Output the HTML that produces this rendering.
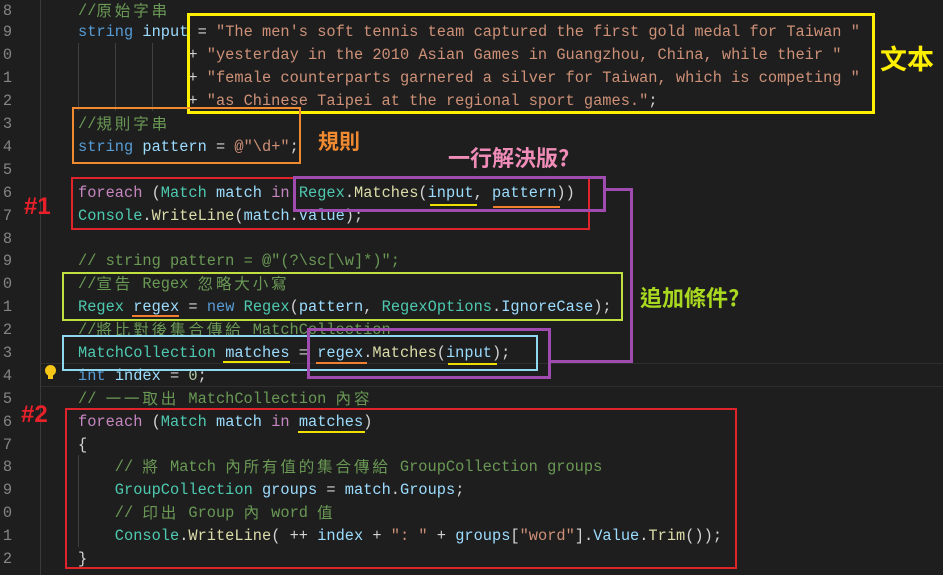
<!DOCTYPE html>
<html><head><meta charset="utf-8"><style>
html,body{margin:0;padding:0;background:#1e1e1e;width:943px;height:575px;overflow:hidden;position:relative}
.ln{position:absolute;left:0;width:12px;overflow:hidden;direction:rtl;color:#858585;font:15.3px "Liberation Mono",monospace;line-height:22px}
.code{position:absolute;left:78px;white-space:pre;font:15.33px "Liberation Mono","Noto Sans CJK TC",monospace;color:#d4d4d4;line-height:22px;height:22px}
.k{color:#569cd6}.t{color:#4ec9b0}.v{color:#9cdcfe}.s{color:#ce9178}.cm{color:#6a9955}.f{color:#dcdcaa}.p{color:#c586c0}.n{color:#b5cea8}
.c{display:inline-block;width:18.4px;text-align:left;font-family:"Noto Sans CJK TC",sans-serif;font-size:15.5px;line-height:14px;vertical-align:-1px}
.box{position:absolute;box-sizing:border-box}
.lab{position:absolute;font-family:"Noto Sans CJK TC",sans-serif;font-weight:bold;white-space:nowrap}
.u{position:absolute;height:2px}
.g{position:absolute;width:1px;background:#404040}
</style></head><body>
<div style="position:absolute;left:40px;top:0;width:1px;height:575px;background:#3a3a3a"></div>
<div style="position:absolute;left:41px;top:363px;width:902px;height:22px;border-top:1px solid #2e2e2e;border-bottom:1px solid #2e2e2e"></div>
<div class="g" style="left:78px;top:43px;height:68px"></div>
<div class="g" style="left:115px;top:43px;height:68px"></div>
<div class="g" style="left:152px;top:43px;height:68px"></div>
<div class="g" style="left:78px;top:455px;height:92px"></div>

<div class="ln" style="top:0px">8</div><div class="ln" style="top:21px">9</div><div class="ln" style="top:44px">0</div><div class="ln" style="top:67px">1</div><div class="ln" style="top:90px">2</div><div class="ln" style="top:113px">3</div><div class="ln" style="top:136px">4</div><div class="ln" style="top:159px">5</div><div class="ln" style="top:182px">6</div><div class="ln" style="top:205px">7</div><div class="ln" style="top:228px">8</div><div class="ln" style="top:250px">9</div><div class="ln" style="top:273px">0</div><div class="ln" style="top:296px">1</div><div class="ln" style="top:319px">2</div><div class="ln" style="top:342px">3</div><div class="ln" style="top:365px">4</div><div class="ln" style="top:388px">5</div><div class="ln" style="top:411px">6</div><div class="ln" style="top:434px">7</div><div class="ln" style="top:456px">8</div><div class="ln" style="top:479px">9</div><div class="ln" style="top:502px">0</div><div class="ln" style="top:525px">1</div><div class="ln" style="top:548px">2</div>

<div class="code" style="top:0px"><span class="cm">//<span class="c">原</span><span class="c">始</span><span class="c">字</span><span class="c">串</span></span></div>
<div class="code" style="top:21px"><span class="k">string</span> <span class="v">input</span> = <span class="s">"The men's soft tennis team captured the first gold medal for Taiwan "</span></div>
<div class="code" style="top:44px">            + <span class="s">"yesterday in the 2010 Asian Games in Guangzhou, China, while their "</span></div>
<div class="code" style="top:67px">            + <span class="s">"female counterparts garnered a silver for Taiwan, which is competing "</span></div>
<div class="code" style="top:90px">            + <span class="s">"as Chinese Taipei at the regional sport games."</span>;</div>
<div class="code" style="top:113px"><span class="cm">//<span class="c">規</span><span class="c">則</span><span class="c">字</span><span class="c">串</span></span></div>
<div class="code" style="top:136px"><span class="k">string</span> <span class="v">pattern</span> = <span class="s">@"\d+"</span>;</div>
<div class="code" style="top:182px"><span class="p">foreach</span> (<span class="t">Match</span> <span class="v">match</span> <span class="p">in</span> <span class="t">Regex</span>.<span class="f">Matches</span>(<span class="v">input</span>, <span class="v">pattern</span>))</div>
<div class="code" style="top:205px"><span class="t">Console</span>.<span class="f">WriteLine</span>(<span class="v">match</span>.<span class="v">Value</span>);</div>
<div class="code" style="top:250px"><span class="cm">// string pattern = @"(?\sc[\w]*)";</span></div>
<div class="code" style="top:273px"><span class="cm">//<span class="c">宣</span><span class="c">告</span> Regex <span class="c">忽</span><span class="c">略</span><span class="c">大</span><span class="c">小</span><span class="c">寫</span></span></div>
<div class="code" style="top:296px"><span class="t">Regex</span> <span class="v">regex</span> = <span class="k">new</span> <span class="t">Regex</span>(<span class="v">pattern</span>, <span class="t">RegexOptions</span>.<span class="v">IgnoreCase</span>);</div>
<div class="code" style="top:319px"><span class="cm">//<span class="c">將</span><span class="c">比</span><span class="c">對</span><span class="c">後</span><span class="c">集</span><span class="c">合</span><span class="c">傳</span><span class="c">給</span> MatchCollection</span></div>
<div class="code" style="top:342px"><span class="t">MatchCollection</span> <span class="v">matches</span> = <span class="v">regex</span>.<span class="f">Matches</span>(<span class="v">input</span>);</div>
<div class="code" style="top:365px"><span class="k">int</span> <span class="v">index</span> = <span class="n">0</span>;</div>
<div class="code" style="top:388px"><span class="cm">// <span class="c">一</span><span class="c">一</span><span class="c">取</span><span class="c">出</span> MatchCollection <span class="c">內</span><span class="c">容</span></span></div>
<div class="code" style="top:411px"><span class="p">foreach</span> (<span class="t">Match</span> <span class="v">match</span> <span class="p">in</span> <span class="v">matches</span>)</div>
<div class="code" style="top:434px">{</div>
<div class="code" style="top:456px">    <span class="cm">// <span class="c">將</span> Match <span class="c">內</span><span class="c">所</span><span class="c">有</span><span class="c">值</span><span class="c">的</span><span class="c">集</span><span class="c">合</span><span class="c">傳</span><span class="c">給</span> GroupCollection groups</span></div>
<div class="code" style="top:479px">    <span class="t">GroupCollection</span> <span class="v">groups</span> = <span class="v">match</span>.<span class="v">Groups</span>;</div>
<div class="code" style="top:502px">    <span class="cm">// <span class="c">印</span><span class="c">出</span> Group <span class="c">內</span> word <span class="c">值</span></span></div>
<div class="code" style="top:525px">    <span class="t">Console</span>.<span class="f">WriteLine</span>( ++ <span class="v">index</span> + <span class="s">": "</span> + <span class="v">groups</span>[<span class="s">"word"</span>].<span class="v">Value</span>.<span class="f">Trim</span>());</div>
<div class="code" style="top:548px">}</div>

<div style="position:absolute;left:45px;top:365px;width:11px;height:11px;border-radius:50%;background:#f5c518"></div>
<div style="position:absolute;left:48px;top:375px;width:5px;height:4px;background:#f5c518"></div>

<div class="u" style="left:430px;top:204px;width:47px;background:#f0e000"></div>
<div class="u" style="left:493px;top:206px;width:67px;background:#f08030"></div>
<div class="u" style="left:132px;top:315px;width:47px;background:#f08030"></div>
<div class="u" style="left:223px;top:361px;width:67px;background:#f0e000"></div>
<div class="u" style="left:316px;top:362px;width:51px;background:#f08030"></div>
<div class="u" style="left:448px;top:363px;width:49px;background:#f0e000"></div>
<div class="u" style="left:298px;top:431px;width:67px;background:#f0e000"></div>

<div class="box" style="left:187px;top:13px;width:688px;height:101px;border:3px solid #ffef00"></div>
<div class="box" style="left:72px;top:107px;width:229px;height:57px;border:2px solid #f08a30"></div>
<div class="box" style="left:71px;top:177px;width:519px;height:53px;border:2px solid #e0242c"></div>
<div class="box" style="left:293px;top:176px;width:313px;height:36px;border:3px solid #a04bb0"></div>
<div class="box" style="left:605px;top:188px;width:28px;height:175px;border:3px solid #a04bb0;border-left:none"></div>
<div class="box" style="left:548px;top:360px;width:84px;height:3px;background:#a04bb0"></div>
<div class="box" style="left:62px;top:272px;width:561px;height:49px;border:2px solid #c0e040"></div>
<div class="box" style="left:62px;top:335px;width:476px;height:36px;border:2px solid #90d8f0"></div>
<div class="box" style="left:307px;top:328px;width:244px;height:51px;border:3px solid #a04bb0"></div>
<div class="box" style="left:65px;top:408px;width:672px;height:161px;border:2px solid #e0242c"></div>

<div class="lab" style="left:880px;top:38px;font-size:27px;color:#ffef00">文本</div>
<div class="lab" style="left:318px;top:126px;font-size:21px;color:#f08a30">規則</div>
<div class="lab" style="left:448px;top:141px;font-size:22px;color:#f08cb8">一行解決版?</div>
<div class="lab" style="left:640px;top:281px;font-size:22px;color:#a8d820">追加條件?</div>
<div class="lab" style="left:24px;top:193px;font-size:24px;color:#e8202a;font-family:'Liberation Sans',sans-serif">#1</div>
<div class="lab" style="left:21px;top:401px;font-size:24px;color:#e8202a;font-family:'Liberation Sans',sans-serif">#2</div>
</body></html>
